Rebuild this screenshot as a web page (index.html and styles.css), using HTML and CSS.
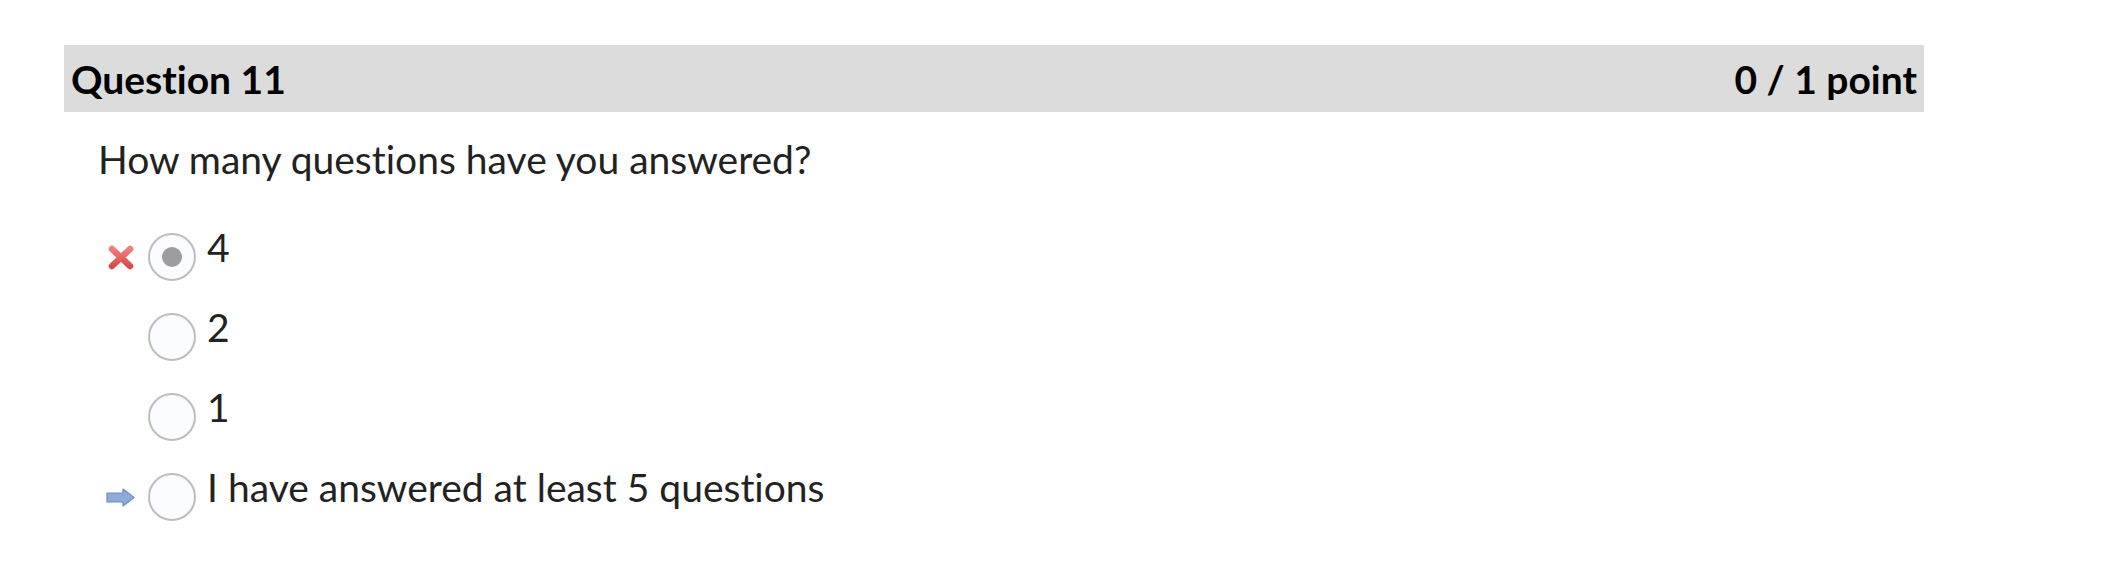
FILE: index.html
```html
<!DOCTYPE html>
<html lang="en">
<head>
<meta charset="utf-8">
<title>Question 11</title>
<link rel="stylesheet" href="styles.css">
</head>
<body>
<div class="page">
  <div class="question-head">
    <span class="q-title">Question 11</span>
    <span class="q-score">0 / 1 point</span>
  </div>
  <p class="q-text">How many questions have you answered?</p>
  <ul class="options">
    <li class="option">
      <span class="mark">
        <svg width="28" height="27" viewBox="0 0 28 27" aria-hidden="true">
          <defs>
            <linearGradient id="xg" x1="0" y1="0" x2="0" y2="1">
              <stop offset="0" stop-color="#f07e7e"/>
              <stop offset="1" stop-color="#d94b4b"/>
            </linearGradient>
          </defs>
          <path d="M5 5 L23 22 M23 5 L5 22" stroke="url(#xg)" stroke-width="6.5" stroke-linecap="round" fill="none"/>
        </svg>
      </span>
      <span class="radio checked"></span>
      <span class="label">4</span>
    </li>
    <li class="option">
      <span class="mark"></span>
      <span class="radio"></span>
      <span class="label">2</span>
    </li>
    <li class="option">
      <span class="mark"></span>
      <span class="radio"></span>
      <span class="label">1</span>
    </li>
    <li class="option">
      <span class="mark">
        <svg width="29" height="19" viewBox="0 0 29 19" aria-hidden="true">
          <polygon points="1,5 17,5 17,1 28,9.5 17,18 17,14 1,14" fill="#91aad9" stroke="#6d8cc6" stroke-width="1.2" stroke-linejoin="round"/>
        </svg>
      </span>
      <span class="radio"></span>
      <span class="label">I have answered at least 5 questions</span>
    </li>
  </ul>
</div>
</body>
</html>
```

FILE: styles.css
```css
* { box-sizing: border-box; }

body {
  margin: 0;
  background: #ffffff;
  font-family: Lato, "Open Sans", sans-serif;
  font-variant-ligatures: none;
  color: #222222;
}

.page {
  padding: 45px 0 0 64px;
}

.question-head {
  width: 1860px;
  height: 67px;
  background: #dcdcdc;
  display: flex;
  justify-content: space-between;
  align-items: center;
  padding: 0 7px 0 7px;
  color: #000;
  font-weight: 700;
  font-size: 39px;
  line-height: 46px;
}

.q-text {
  margin: 24px 0 0 34px;
  font-size: 39px;
  line-height: 46px;
}

.options {
  list-style: none;
  margin: 42px 0 0 36px;
  padding: 0;
  display: flex;
  flex-direction: column;
  gap: 23px;
}

.option {
  display: flex;
  align-items: flex-start;
}

.mark {
  width: 35px;
  height: 48px;
  margin-top: 9px;
  display: flex;
  align-items: center;
  justify-content: flex-end;
}

.radio {
  width: 48px;
  height: 48px;
  margin: 9px 11px 0 13px;
  border: 2px solid #bdbdbd;
  border-radius: 50%;
  background: #fbfcff;
  display: flex;
  align-items: center;
  justify-content: center;
}

.radio.checked::after {
  content: "";
  width: 20px;
  height: 20px;
  border-radius: 50%;
  background: #9d9d9d;
}

.label {
  font-size: 39px;
  line-height: 46px;
}
```
